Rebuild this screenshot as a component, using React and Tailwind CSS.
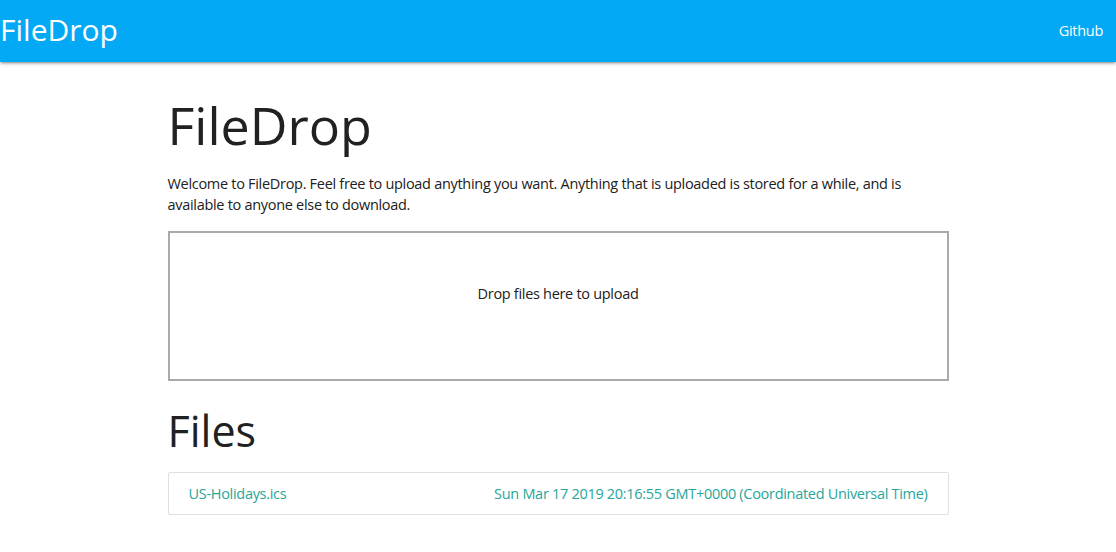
import React from 'react';

const font = { fontFamily: '"Open Sans", "Noto Sans", sans-serif' };

const Nav = () => (
  <nav className="h-[62px] bg-[#03a9f4] text-white flex items-center justify-between shadow-[0_2px_2px_0_rgba(0,0,0,0.14),0_3px_1px_-2px_rgba(0,0,0,0.12),0_1px_5px_0_rgba(0,0,0,0.2)]">
    <a href="#" className="text-[30px] leading-none -mt-[2px] tracking-normal">FileDrop</a>
    <a href="#" className="text-[14.5px] px-[13px] -mt-[1px]">Github</a>
  </nav>
);

export default function App() {
  return (
    <div className="min-h-screen bg-white text-[#212121] tracking-[-0.3px]" style={font}>
      <Nav />
      <main className="w-[781px] mx-auto">
        <h1 className="text-[52px] font-normal leading-none mt-[37px] mb-[22px] tracking-normal">FileDrop</h1>
        <p className="text-[14.5px] leading-[21px]">
          Welcome to FileDrop. Feel free to upload anything you want. Anything that is uploaded is stored for a while, and is available to anyone else to download.
        </p>
        <div className="mt-[16px] h-[150px] border-2 border-[#aaaaaa] flex justify-center pt-[50px] text-[14.5px] leading-[21px]">
          Drop files here to upload
        </div>
        <h2 className="text-[43px] font-normal leading-none mt-[28px] mb-[20px] tracking-normal">Files</h2>
        <ul className="border border-[#e0e0e0] rounded-[2px]">
          <li className="flex justify-between px-[20px] py-[10px] text-[14.5px] leading-[21px] text-[#26a69a]">
            <a href="#">US-Holidays.ics</a>
            <span>Sun Mar 17 2019 20:16:55 GMT+0000 (Coordinated Universal Time)</span>
          </li>
        </ul>
      </main>
    </div>
  );
}
